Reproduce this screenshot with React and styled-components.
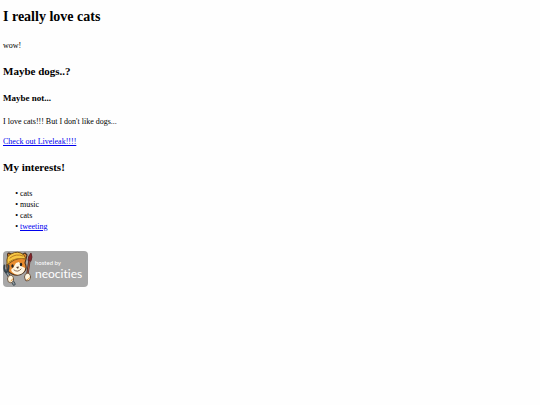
import React from "react";
import styled, { createGlobalStyle } from "styled-components";

const GlobalStyle = createGlobalStyle`
  body {
    margin: 0;
    background: #fefefe;
    color: #000;
    font-family: "Liberation Serif", "Times New Roman", serif;
    font-size: 8px;
    line-height: 11px;
  }
`;

const Page = styled.main`
  padding: 7px 3px;
`;

const Title = styled.h1`
  margin: 0 0 13px;
  font-size: 14px;
  line-height: 20px;
`;

const Heading = styled.h2`
  margin: 12px 0 13px;
  font-size: 11px;
  line-height: 16px;
`;

const Subheading = styled.h3`
  margin: 12px 0;
  font-size: 9px;
  line-height: 12px;
`;

const Paragraph = styled.p`
  margin: 0 0 9px;
`;

const TextLink = styled.a`
  color: #0000ee;
  text-decoration: underline;
`;

const Interests = styled.ul`
  margin: 0 0 19px;
  padding-left: 17px;
  list-style-type: "\\2022\\a0";
`;

const BadgeLink = styled.a`
  display: inline-block;
`;

const Badge = styled.svg`
  display: block;
  width: 85px;
  height: 36px;
`;

const BadgeText = styled.text`
  fill: #fff;
  font-family: Lato, sans-serif;
  font-size: ${({ $size }) => $size}px;
  font-variant-ligatures: none;
`;

function NeocitiesBadge() {
  return (
    <Badge viewBox="0 0 85 36" role="img" aria-label="Hosted by Neocities">
      <rect width="85" height="36" rx="4" fill="#a7a7a7" />
      <g strokeLinecap="round" strokeLinejoin="round">
        <path d="M5.5 10.5 4.5 3.5Q5 1 8 3L11 5 18 4 22 2 24 4 22 12Q25 18 20 22 15 26 9 23 3 20 4 14Z" fill="#e98b2d" stroke="#4b321f" strokeWidth="1.1" />
        <path d="M13 12 16 11 18 15 22 17Q22 21 18 23 13 25 9 21 7 18 10 17Z" fill="#fff5df" />
        <path d="M4 12Q3 5 8 3 15-1 21 4L23 8Q15 6 8 11L4 14Z" fill="#f6c642" stroke="#765019" strokeWidth="1" />
        <path d="M7 7Q13 2 20 5M6 11Q13 6 22 8" fill="none" stroke="#b87a20" strokeWidth="1" />
        <ellipse cx="9.5" cy="15" rx="1.2" ry="1.7" fill="#242424" />
        <ellipse cx="18" cy="13.5" rx="1.2" ry="1.7" fill="#242424" />
        <path d="M13 16 16 15.5 15 18Z" fill="#563525" />
        <path d="M11 19Q15 22 18 18" fill="none" stroke="#70452e" strokeWidth="0.8" />
        <path d="M3 20 11 33" stroke="#37434b" strokeWidth="3.2" />
        <path d="M3 20 11 33" stroke="#8b969b" strokeWidth="1.5" />
        <path d="M1.5 14.5Q0.5 20 3 21.5 6 20 5.5 14.5" fill="none" stroke="#37434b" strokeWidth="1.8" />
        <path d="M23.5 29 26.5 9" stroke="#492a25" strokeWidth="2.3" />
        <path d="M24 27 26.5 10" stroke="#a95d42" strokeWidth="1" />
        <path d="M25 9Q25 5 28 2 30 6 28 10Z" fill="#87242a" stroke="#582125" strokeWidth="0.8" />
        <ellipse cx="7.5" cy="28" rx="3" ry="3.7" fill="#fff6df" stroke="#674c34" strokeWidth="0.9" />
        <ellipse cx="24.5" cy="26" rx="3" ry="3.7" fill="#fff6df" stroke="#674c34" strokeWidth="0.9" />
        <path d="M8 30 9.5 28M24 29 26.5 27" stroke="#e99a3c" strokeWidth="1" />
      </g>
      <BadgeText x="32" y="14" $size={6}>hosted by</BadgeText>
      <BadgeText x="32" y="27" $size={12}>neocities</BadgeText>
    </Badge>
  );
}

export default function App() {
  return (
    <>
      <GlobalStyle />
      <Page>
        <Title>I really love cats</Title>
        <Paragraph>wow!</Paragraph>
        <Heading>Maybe dogs..?</Heading>
        <Subheading>Maybe not...</Subheading>
        <Paragraph>I love cats!!! But I don't like dogs...</Paragraph>
        <Paragraph>
          <TextLink href="#liveleak">Check out Liveleak!!!!</TextLink>
        </Paragraph>
        <Heading>My interests!</Heading>
        <Interests>
          <li>cats</li>
          <li>music</li>
          <li>cats</li>
          <li>
            <TextLink href="#tweeting">tweeting</TextLink>
          </li>
        </Interests>
        <BadgeLink href="#neocities">
          <NeocitiesBadge />
        </BadgeLink>
      </Page>
    </>
  );
}
